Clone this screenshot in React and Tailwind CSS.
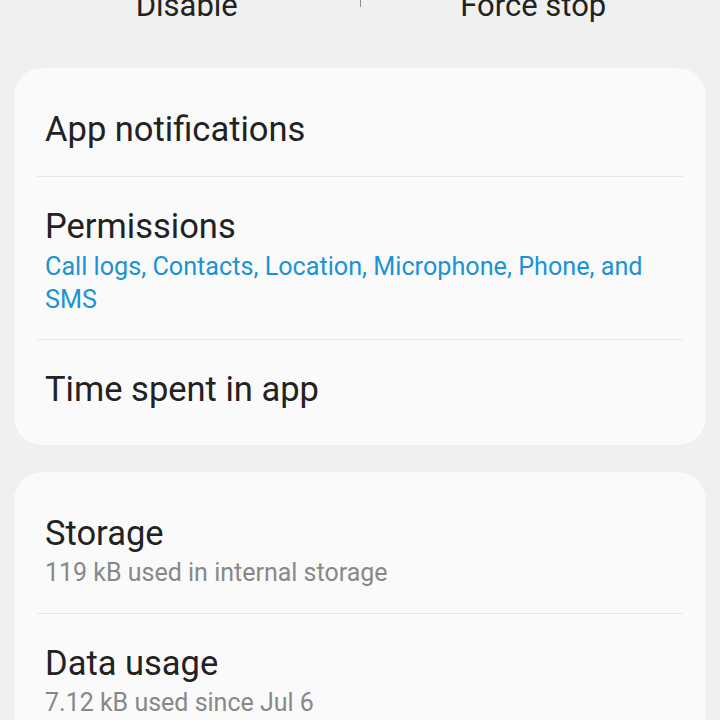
export default function App() {
  return (
    <div className="w-[720px] h-[720px] overflow-hidden bg-[#f0f0f0] font-['Roboto',sans-serif] text-[#222222]">
      {/* action buttons, scrolled mostly out of view */}
      <div className="flex px-[14px] -mt-[14px] h-[40px]">
        <div className="flex-1 text-center text-[31px] leading-[40px]">Disable</div>
        <div className="w-px h-[21px] bg-[#8c8c8c]" />
        <div className="flex-1 text-center text-[31px] leading-[40px]">Force stop</div>
      </div>

      <div className="mx-[14px] mt-[42px] rounded-[28px] bg-[#fafafa]">
        <div className="px-[31px] pt-[41px] pb-[27px]">
          <div className="text-[34.5px] leading-[40px]">App notifications</div>
        </div>
        <div className="mx-[23px] h-px bg-[#e6e6e6]" />
        <div className="px-[31px] pt-[29px] pb-[23px]">
          <div className="text-[34.5px] leading-[40px]">Permissions</div>
          <div className="mt-[4px] text-[25.2px] leading-[33px] text-[#1b93d6]">
            Call logs, Contacts, Location, Microphone, Phone, and SMS
          </div>
        </div>
        <div className="mx-[23px] h-px bg-[#e6e6e6]" />
        <div className="px-[31px] pt-[29px] pb-[36px]">
          <div className="text-[34.5px] leading-[40px]">Time spent in app</div>
        </div>
      </div>

      <div className="mx-[14px] mt-[27px] rounded-[28px] bg-[#fafafa]">
        <div className="px-[31px] pt-[41px] pb-[23px]">
          <div className="text-[34.5px] leading-[40px]">Storage</div>
          <div className="mt-[3px] text-[25px] leading-[34px] text-[#888888]">119 kB used in internal storage</div>
        </div>
        <div className="mx-[23px] h-px bg-[#e6e6e6]" />
        <div className="px-[31px] pt-[29px] pb-[24px]">
          <div className="text-[34.5px] leading-[40px]">Data usage</div>
          <div className="mt-[3px] text-[25px] leading-[34px] text-[#888888]">7.12 kB used since Jul 6</div>
        </div>
      </div>
    </div>
  );
}
